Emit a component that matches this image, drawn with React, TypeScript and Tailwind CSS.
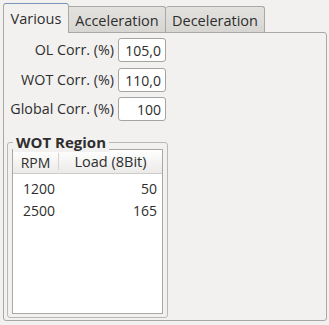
import React from "react";

const font = { fontFamily: '"Open Sans", "Noto Sans", sans-serif' };

function Row({ label, value }: { label: string; value: string }) {
  return (
    <div className="flex items-center justify-end gap-[4px] w-[162px] h-[24px]">
      <span className="text-[14.3px] text-[#2e2e2e] leading-none">{label}</span>
      <div className="w-[48px] h-[24px] bg-white border border-[#a4a4a0] rounded-[3px] flex items-center justify-end pr-[4px] text-[14px] text-[#2e2e2e]">
        {value}
      </div>
    </div>
  );
}

export default function App() {
  return (
    <div className="w-[329px] h-[325px] bg-[#f2f1f0] overflow-hidden" style={font}>
      <div className="flex items-end h-[32px] pl-[3px]">
        <div className="relative z-10 -mb-px h-[30px] w-[66px] border border-b-0 border-[#a8a8a4] border-t-[#7b95b6] rounded-t-[3px] bg-[#f2f1f0] flex items-center justify-center pt-[1px] text-[14.5px] text-[#2e2e2e]">
          Various
        </div>
        <div className="h-[26px] w-[97px] border border-l-0 border-b-0 border-[#a8a8a4] rounded-tr-[3px] bg-gradient-to-b from-[#e4e2de] to-[#d8d6d2] flex items-center justify-center pt-[2px] text-[14.5px] text-[#2e2e2e]">
          Acceleration
        </div>
        <div className="h-[26px] w-[99px] border border-l-0 border-b-0 border-[#a8a8a4] rounded-t-[3px] bg-gradient-to-b from-[#e4e2de] to-[#d8d6d2] flex items-center justify-center pt-[2px] text-[14.5px] text-[#2e2e2e]">
          Deceleration
        </div>
      </div>
      <div className="ml-[3px] w-[324px] h-[289px] border border-[#a8a8a4] rounded-b-[3px] rounded-tr-[3px] pt-[5px] flex flex-col">
        <div className="flex flex-col">
          <Row label="OL Corr. (%)" value="105,0" />
          <div className="h-[6px]" />
          <Row label="WOT Corr. (%)" value="110,0" />
          <div className="h-[5px]" />
          <Row label="Global Corr. (%)" value="100" />
        </div>
        <div className="relative ml-[3px] mt-[21px] w-[161px] h-[176px] border border-[#b8b8b4] rounded-[3px] px-[4px] pt-[6px] pb-[3px]">
          <span className="absolute left-[5px] -top-[11px] px-[3px] bg-[#f2f1f0] text-[15px] font-bold text-[#2e2e2e] leading-[20px]">
            WOT Region
          </span>
          <div className="h-full w-full bg-white border border-[#a8a8a4] flex flex-col">
            <div className="flex h-[24px] border-b border-[#cfcdca] bg-gradient-to-b from-[#ffffff] to-[#ebeae8] text-[14px] text-[#2e2e2e]">
              <div className="w-[46px] flex items-center justify-center border-r border-[#d4d2cf] my-[3px] pt-[1px]">RPM</div>
              <div className="flex-1 flex items-center justify-center pt-[1px] text-[14.5px]">Load (8Bit)</div>
            </div>
            <div className="flex flex-col pt-[3px] text-[14px] text-[#2e2e2e]">
              <div className="flex h-[22px] items-center">
                <div className="w-[46px] pl-[10px]">1200</div>
                <div className="flex-1 text-right pr-[5px]">50</div>
              </div>
              <div className="flex h-[22px] items-center">
                <div className="w-[46px] pl-[10px]">2500</div>
                <div className="flex-1 text-right pr-[5px]">165</div>
              </div>
            </div>
          </div>
        </div>
      </div>
    </div>
  );
}
